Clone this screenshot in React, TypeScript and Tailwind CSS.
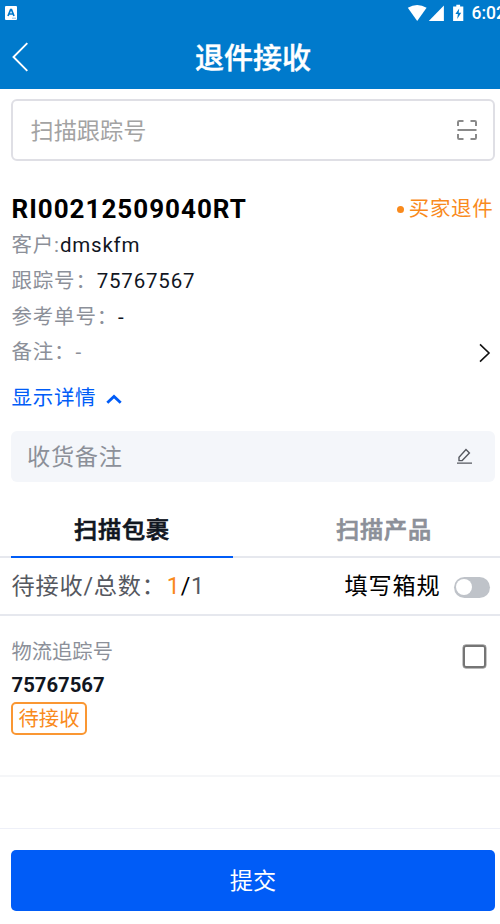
import { useState } from "react";

const INFO_ROWS = [
  { label: "客户:", value: "dmskfm", muted: false },
  { label: "跟踪号：", value: "75767567", muted: false },
  { label: "参考单号：", value: "-", muted: false },
  { label: "备注：", value: "-", muted: true },
];

function StatusBar() {
  return (
    <div className="flex h-6 items-center pl-[5px] text-white">
      <svg width="12" height="14" viewBox="0 0 12 14" className="mt-px">
        <rect width="12" height="14" rx="1" fill="#fff" />
        <path d="M3 10 5.6 3.6h.9L9 10M4 8h4" fill="none" stroke="#007acc" strokeWidth="1.7" />
        <path d="M7 12.2h4" stroke="#8fc3e8" strokeWidth="1" />
      </svg>
      <svg width="64" height="18" viewBox="0 0 64 18" className="-mt-px ml-[389px] shrink-0" fill="#fff">
        <path d="M1.8 4.8Q11.2-1 20.6 4.8L11.2 18Z" />
        <path d="M37.9 2.6V18H22.8Z" />
        <path d="M47.1 3.4h3.2V1.7h3.8v1.7h3.2V18H47.1Z" />
        <path d="M53.2 5.4 49.4 11h2.5l-.7 4.9 4-6.2h-2.5Z" fill="#007acc" />
      </svg>
      <span className="ml-[1.5px] mt-px whitespace-nowrap text-[17.5px] font-medium leading-6">6:02</span>
    </div>
  );
}

function Header() {
  return (
    <header className="h-[89px] bg-[#007acc]">
      <StatusBar />
      <div className="flex h-[65px] items-center text-white">
        <svg width="20" height="30" viewBox="0 0 20 30" className="ml-[11px]" fill="none" stroke="#fff" strokeWidth="1.9">
          <path d="M16.3 1.2 2.5 15l13.8 13.8" />
        </svg>
        <h1 className="mr-[31px] mt-[5px] flex-1 text-center text-[29px] font-medium leading-[40px] [-webkit-text-stroke:0.4px]">
          退件接收
        </h1>
      </div>
    </header>
  );
}

function SearchBox() {
  return (
    <div className="mx-[11px] mt-[10px] flex h-[62px] items-center justify-between rounded-md border-2 border-[#dfdfe5] pl-[17.5px] pr-[15px]">
      <span className="pt-[2px] text-[23.2px] text-[#a3a3a3]">扫描跟踪号</span>
      <svg width="22" height="22" viewBox="0 0 22 22" fill="none" stroke="#8a8a8a" strokeWidth="2">
        <path d="M2 7V3.2Q2 2 3.2 2H7.5M14.5 2h4.3Q20 2 20 3.2V7M2 15v3.8Q2 20 3.2 20H7.5M14.5 20h4.3Q20 20 20 18.8V15M1.5 11h19" />
      </svg>
    </div>
  );
}

export default function App() {
  const [tab, setTab] = useState(0);
  const [checked, setChecked] = useState(false);

  return (
    <div className="h-[924px] w-[500px] overflow-hidden bg-white font-[Roboto,'Noto_Sans_CJK_SC',sans-serif]">
      <div className="w-[506px]">
        <Header />
        <SearchBox />

        <section className="mt-[30px] px-[11.5px]">
          <div className="flex h-[36px] items-center justify-between">
            <h2 className="text-[26px] font-bold tracking-[1px] text-black">RI00212509040RT</h2>
            <div className="mr-px flex items-center pt-px text-[20.5px] tracking-[0.7px] text-[#f98a1c]">
              <i className="mr-[5px] size-[7px] rounded-full bg-[#f98a1c]" />
              买家退件
            </div>
          </div>
          {INFO_ROWS.map((row) => (
            <div
              key={row.label}
              className="flex h-[35.7px] items-center pt-[1.5px] text-[20.5px] tracking-[0.8px] text-[#8c9099]"
            >
              <span>{row.label}</span>
              <span className={row.muted ? "" : "text-[#11161f]"}>{row.value}</span>
              {row.muted && (
                <svg width="14" height="20" viewBox="0 0 14 20" className="ml-auto mr-[3px]" fill="none" stroke="#111" strokeWidth="1.6">
                  <path d="m2 1.4 9 8.6-9 8.6" />
                </svg>
              )}
            </div>
          ))}
          <button className="mt-[12px] flex h-[34px] items-center text-[20.5px] tracking-[0.7px] text-[#005cf7]">
            显示详情
            <svg width="16" height="10" viewBox="0 0 16 10" className="ml-[10px]" fill="none" stroke="#005cf7" strokeWidth="2.8">
              <path d="m1.3 8.7 6.7-6.3 6.7 6.3" />
            </svg>
          </button>
        </section>

        <div className="mx-[11px] mt-[15.5px] flex h-[51px] items-center justify-between rounded-md bg-[#f4f6fa] pl-4 pr-[22px]">
          <span className="pt-px text-[23.2px] tracking-[0.7px] text-[#8c9099]">收货备注</span>
          <svg width="17" height="17" viewBox="0 0 17 17" fill="none" stroke="#55585f" strokeWidth="1.4">
            <path d="M3 12.6V9.2L10 1.6l3.4 3.3-7.2 7.7ZM1 15.1h15" />
          </svg>
        </div>

        <div className="mt-[20px] flex h-[56px] border-b-2 border-[#e6e8ee] px-[11px] text-[23.2px] font-medium tracking-[0.8px]">
          {["扫描包裹", "扫描产品"].map((label, i) => (
            <button
              key={label}
              onClick={() => setTab(i)}
              className={`-mb-[2px] h-[56px] w-[222px] border-b-2 pt-[2px] [-webkit-text-stroke:0.7px] ${i === 0 ? "" : "ml-[40px]"} ${
                tab === i ? "border-[#005cf7] text-[#11161f]" : "border-transparent text-[#8c9099]"
              }`}
            >
              {label}
            </button>
          ))}
        </div>

        <div className="flex h-[58px] items-center border-b-2 border-[#e6e8ee] pl-[11.5px] pr-4 text-[23.2px] tracking-[0.8px]">
          <span className="text-[#555860]">待接收/总数：</span>
          <span className="ml-px text-[#f98a1c]">1</span>
          <span className="text-black">/</span>
          <span className="text-[#555860]">1</span>
          <span className="ml-auto mr-[13.5px] text-black">填写箱规</span>
          <span className="mt-[2px] flex h-[21px] w-[36px] items-center rounded-full bg-[#bfc3c9] pl-[2px]">
            <i className="size-[16px] rounded-full bg-white" />
          </span>
        </div>

        <div className="flex h-[161px] justify-between border-b-2 border-[#f5f6f8] pl-[11.5px] pr-[20px] pt-[18px]">
          <div className="text-[20.3px]">
            <div className="h-[34px] pt-px leading-[34px] text-[#8c9099]">物流追踪号</div>
            <div className="h-[34px] font-bold leading-[34px] text-[#11161f]">75767567</div>
            <span className="-ml-[0.5px] flex h-[33px] w-[76px] items-center justify-center rounded-[5px] border-2 border-[#fa9733] pt-px text-[#f98a1c]">
              待接收
            </span>
          </div>
          <button
            onClick={() => setChecked(!checked)}
            aria-label="75767567"
            className={`mt-[11px] size-[23px] rounded-[3px] border-[2.5px] border-[#757575] shadow-[0_0_0_0.4px_#757575] ${checked ? "bg-[#005cf7]" : ""}`}
          />
        </div>

        <div className="mt-[51px] border-t border-[#eef0f8] px-[11px] pt-[20.5px]">
          <button className="h-[61px] w-full rounded-[5px] bg-[#005cf7] pt-[2px] text-[23.2px] text-white">提交</button>
        </div>
      </div>
    </div>
  );
}
